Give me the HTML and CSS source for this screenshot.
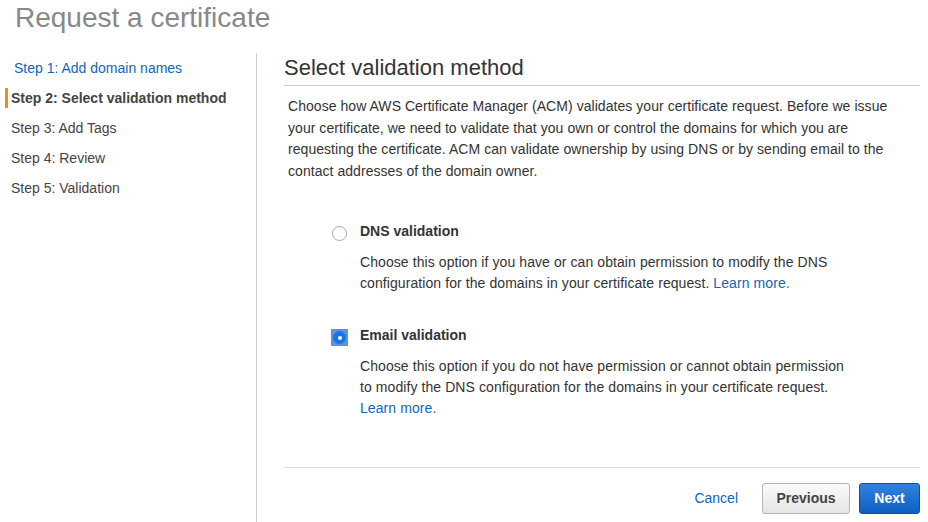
FILE: index.html
```html
<!DOCTYPE html>
<html>
<head>
<meta charset="utf-8">
<link rel="stylesheet" href="styles.css">
</head>
<body>
<h1 class="page-title">Request a certificate</h1>
<div class="layout">
  <nav class="steps">
    <a class="step step-link" href="#">Step 1: Add domain names</a>
    <div class="step step-active">Step 2: Select validation method</div>
    <div class="step">Step 3: Add Tags</div>
    <div class="step">Step 4: Review</div>
    <div class="step">Step 5: Validation</div>
  </nav>
  <main class="content">
    <h2 class="section-title">Select validation method</h2>
    <p class="intro">Choose how AWS Certificate Manager (ACM) validates your certificate request. Before we issue your certificate, we need to validate that you own or control the domains for which you are requesting the certificate. ACM can validate ownership by using DNS or by sending email to the contact addresses of the domain owner.</p>
    <div class="options">
      <div class="option">
        <span class="radio"></span>
        <div class="option-body">
          <div class="option-label">DNS validation</div>
          <p class="option-desc">Choose this option if you have or can obtain permission to modify the DNS configuration for the domains in your certificate request. <a href="#">Learn more.</a></p>
        </div>
      </div>
      <div class="option">
        <span class="radio radio-checked"><span class="radio-dot"></span></span>
        <div class="option-body">
          <div class="option-label">Email validation</div>
          <p class="option-desc">Choose this option if you do not have permission or cannot obtain permission to modify the DNS configuration for the domains in your certificate request. <a href="#">Learn more.</a></p>
        </div>
      </div>
    </div>
    <div class="actions">
      <a class="cancel" href="#">Cancel</a>
      <button class="btn btn-secondary">Previous</button>
      <button class="btn btn-primary">Next</button>
    </div>
  </main>
</div>
</body>
</html>
```
FILE: styles.css
```css
* { box-sizing: border-box; }
html, body { margin: 0; padding: 0; background: #fff; }
body {
  font-family: "Liberation Sans", Arial, Helvetica, sans-serif;
  font-size: 14px;
  color: #333;
  width: 928px;
  height: 522px;
  overflow: hidden;
}
a { color: #1166bb; text-decoration: none; }
.page-title {
  margin: 0;
  padding: 2px 0 0 15px;
  height: 53px;
  font-size: 28px;
  font-weight: normal;
  color: #888;
  line-height: 32px;
}
.layout {
  display: flex;
  height: 469px;
}
.steps {
  width: 257px;
  flex: none;
  border-right: 1px solid #ccc;
  display: flex;
  flex-direction: column;
}
.step {
  display: block;
  height: 30px;
  line-height: 30px;
  padding-left: 11px;
  color: #444;
  font-size: 14px;
}
.step-link { padding-left: 14px; color: #1166bb; }
.step-active {
  font-weight: bold;
  color: #444;
  position: relative;
}
.step-active::before {
  content: "";
  position: absolute;
  left: 5px;
  top: 5px;
  width: 3px;
  height: 20px;
  background: #f08a24;
}
.content {
  flex: 1;
  padding: 0 8px 0 27px;
  display: flex;
  flex-direction: column;
}
.section-title {
  margin: 0;
  font-size: 22px;
  font-weight: normal;
  color: #333;
  height: 33px;
  line-height: 30px;
  border-bottom: 1px solid #ccc;
}
.intro {
  margin: 10px 0 0 4px;
  width: 606px;
  line-height: 21.5px;
  color: #333;
  letter-spacing: 0.05px;
}
.options {
  margin: 39px 0 0 48px;
  display: flex;
  flex-direction: column;
  gap: 31px;
}
.option {
  display: flex;
  gap: 13px;
}
.radio {
  flex: none;
  width: 15px;
  height: 15px;
  margin-top: 5px;
  border: 1px solid #a8a8a8;
  border-radius: 50%;
  background: #fff;
  display: flex;
  align-items: center;
  justify-content: center;
}
.radio-checked {
  border: none;
  border-radius: 0;
  background: #5b93e0;
  width: 17px;
  height: 17px;
  margin-left: -1px;
  margin-right: -1px;
  margin-top: 4px;
}
.radio-checked .radio-dot {
  width: 13px;
  height: 13px;
  border-radius: 50%;
  background: #1a73e8;
  display: flex;
  align-items: center;
  justify-content: center;
}
.radio-checked .radio-dot::after {
  content: "";
  width: 4px;
  height: 4px;
  border-radius: 50%;
  background: #fff;
}
.option-label {
  font-weight: bold;
  color: #333;
  line-height: 20px;
}
.option-desc {
  margin: 11px 0 0 0;
  line-height: 21px;
  width: 490px;
  color: #333;
  letter-spacing: 0.08px;
}
.actions {
  margin-top: auto;
  border-top: 1px solid #ddd;
  height: 55px;
  display: flex;
  align-items: center;
  justify-content: flex-end;
  padding-top: 6px;
}
.cancel { margin-right: 24px; font-size: 14px; }
.btn {
  font-family: inherit;
  font-size: 14px;
  font-weight: bold;
  height: 31px;
  border-radius: 3px;
  cursor: pointer;
}
.btn-secondary {
  width: 88px;
  color: #444;
  border: 1px solid #b5b5b5;
  background: linear-gradient(#fbfbfb, #e5e5e5);
  margin-right: 9px;
}
.btn-primary {
  width: 61px;
  color: #fff;
  border: 1px solid #0c4f9e;
  background: linear-gradient(#3083e0, #0c5fc0);
}
```
